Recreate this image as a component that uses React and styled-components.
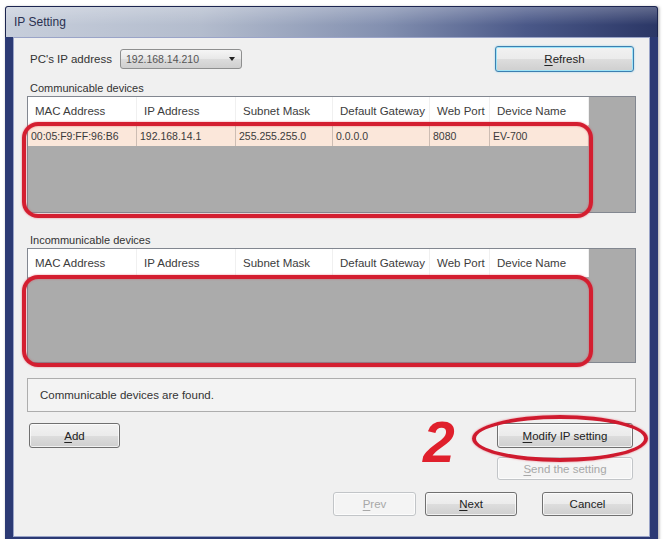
import React from 'react'
import styled, {createGlobalStyle} from 'styled-components'

const GlobalStyle = createGlobalStyle`
  body {
    margin: 0;
    background: #ffffff;
    font-family: "Liberation Sans", Arial, sans-serif;
  }
`

const Window = styled.div`
  margin: 6px 0 0 5px;
  width: 653px;
  box-shadow: 1px 1px 3px rgba(0, 0, 0, 0.35);
`

const TitleBar = styled.div`
  height: 30px;
  border: 1px solid #1c2550;
  border-bottom: 0;
  border-radius: 3px 3px 0 0;
  padding-left: 8px;
  display: flex;
  align-items: center;
  font-size: 12px;
  color: #2a3050;
  background:
    linear-gradient(180deg, rgba(255, 255, 255, 0.25), rgba(255, 255, 255, 0) 60%),
    linear-gradient(90deg, #c7cedb 0%, #b3bccd 30%, #8390b0 58%, #4a5888 80%, #2b3766 100%);
`

const Client = styled.div`
  height: 491px;
  box-sizing: content-box;
  border: 8px solid #2c3a74;
  border-top: 0;
  border-bottom-width: 7px;
  box-shadow: inset 1px 1px 0 #9aa4c8, inset -1px -1px 0 #9aa4c8;
  background: #f0f0f0;
  padding: 9px 14px 0 14px;
  display: flex;
  flex-direction: column;
  position: relative;
`

const TopRow = styled.div`
  height: 26px;
  display: flex;
  align-items: center;
`

const Label = styled.span`
  font-size: 11.5px;
  color: #333;
  padding-left: 3px;
  width: 90px;
`

const Combo = styled.div`
  width: 122px;
  height: 20px;
  box-sizing: border-box;
  border: 1px solid #8e8f8f;
  border-radius: 3px;
  background: linear-gradient(180deg, #f5f5f5 0%, #e8e8e8 50%, #dcdcdc 51%, #cfcfcf 100%);
  display: flex;
  align-items: center;
  padding: 0 6px 0 5px;
  font-size: 10.5px;
  color: #555;
`

const ComboArrow = styled.span`
  margin-left: auto;
  width: 0;
  height: 0;
  border-left: 3px solid transparent;
  border-right: 3px solid transparent;
  border-top: 4px solid #222;
`

const Button = styled.div`
  width: ${p => p.$w}px;
  height: ${p => p.$h || 25}px;
  box-sizing: border-box;
  border: 1px solid ${p => (p.$disabled ? '#c2c5c8' : p.$default ? '#3c7fb1' : '#707070')};
  border-radius: 3px;
  background: ${p =>
    p.$disabled
      ? '#f4f4f4'
      : 'linear-gradient(180deg, #f2f2f2 0%, #ebebeb 50%, #dddddd 51%, #cfcfcf 100%)'};
  box-shadow: ${p =>
    p.$default ? 'inset 0 0 0 1px #9fe4f7, 0 0 2px #8fd0e8' : 'inset 0 0 0 1px rgba(255,255,255,0.7)'};
  display: flex;
  align-items: center;
  justify-content: center;
  font-size: 11.5px;
  color: ${p => (p.$disabled ? '#a8a8a8' : '#222')};

  & u {
    text-underline-offset: 2px;
  }
`

const RefreshButton = styled(Button)`
  margin-left: auto;
  margin-right: 2px;
`

const GroupLabel = styled.div`
  margin-top: ${p => p.$top}px;
  height: 16px;
  line-height: 16px;
  padding-left: 3px;
  font-size: 11px;
  color: #333;
`

const ListView = styled.div`
  position: relative;
  height: ${p => p.$h}px;
  box-sizing: border-box;
  border: 1px solid #828790;
  background: #ababab;
`

const HeaderRow = styled.div`
  width: 561px;
  height: 28px;
  display: flex;
  background: #ffffff;
`

const HeaderCell = styled.div`
  width: ${p => p.$w}px;
  box-sizing: border-box;
  padding-left: ${p => p.$pad || 7}px;
  display: flex;
  align-items: center;
  font-size: 11.5px;
  color: #3c3c3c;
  border-right: 1px solid #f0f0f0;
  white-space: nowrap;
`

const DataRow = styled.div`
  width: 561px;
  height: 21px;
  display: flex;
  background: #fbe7da;
`

const DataCell = styled.div`
  width: ${p => p.$w}px;
  box-sizing: border-box;
  padding-left: 3px;
  display: flex;
  align-items: center;
  font-size: 10.5px;
  color: #3a3a3a;
  border-right: 1px solid #cdbdb3;
  white-space: nowrap;
`

// red marker drawn over the list rows
const Highlight = styled.div`
  position: absolute;
  left: -6px;
  top: ${p => p.$top}px;
  width: 571px;
  height: ${p => p.$h}px;
  box-sizing: border-box;
  border: 4px solid #d41e30;
  border-radius: 16px;
  box-shadow: 0 0 2px rgba(230, 60, 80, 0.7), inset 0 0 2px rgba(230, 60, 80, 0.7);
  pointer-events: none;
`

const StatusBox = styled.div`
  margin-top: 15px;
  height: 34px;
  box-sizing: border-box;
  border: 1px solid #adadad;
  background: #f3f3f3;
  display: flex;
  align-items: center;
  padding-left: 12px;
  font-size: 11.5px;
  color: #333;
`

const Footer = styled.div`
  position: relative;
  margin-top: 11px;
  display: flex;
  flex-direction: column;
`

const FooterRow = styled.div`
  display: flex;
  align-items: center;
  gap: ${p => p.$gap || 0}px;
  justify-content: flex-end;
  margin-top: ${p => p.$top || 0}px;
  padding-right: 3px;
  padding-left: 2px;
`

const AddButton = styled(Button)`
  margin-right: auto;
`

const CancelButton = styled(Button)`
  margin-left: 16px;
`

const StepNumber = styled.div`
  position: absolute;
  left: 396px;
  top: -9px;
  font-size: 57px;
  line-height: 57px;
  font-weight: 700;
  font-style: italic;
  color: #e0202c;
`

const Ring = styled.div`
  position: absolute;
  left: 445px;
  top: -8px;
  width: 176px;
  height: 47px;
  box-sizing: border-box;
  border: 4px solid #cf1a2e;
  border-radius: 50%;
  box-shadow: 0 0 2px rgba(230, 60, 80, 0.7);
  pointer-events: none;
`

const columns = [
  {title: 'MAC Address', w: 109, value: '00:05:F9:FF:96:B6'},
  {title: 'IP Address', w: 99, value: '192.168.14.1'},
  {title: 'Subnet Mask', w: 97, value: '255.255.255.0'},
  {title: 'Default Gateway', w: 97, value: '0.0.0.0'},
  {title: 'Web Port', w: 60, value: '8080'},
  {title: 'Device Name', w: 99, value: 'EV-700'},
]

const DeviceList = ({h, rows, markTop, markH}) => (
  <ListView $h={h}>
    <HeaderRow>
      {columns.map(c => (
        <HeaderCell key={c.title} $w={c.w}>{c.title}</HeaderCell>
      ))}
    </HeaderRow>
    {rows && (
      <DataRow>
        {columns.map(c => (
          <DataCell key={c.title} $w={c.w}>{c.value}</DataCell>
        ))}
      </DataRow>
    )}
    <Highlight $top={markTop} $h={markH} />
  </ListView>
)

const App = () => {
  return (
    <>
      <GlobalStyle />
      <Window>
        <TitleBar>IP Setting</TitleBar>
        <Client>
          <TopRow>
            <Label>PC's IP address</Label>
            <Combo>
              192.168.14.210
              <ComboArrow />
            </Combo>
            <RefreshButton $w={139} $h={26} $default>
              <span><u>R</u>efresh</span>
            </RefreshButton>
          </TopRow>

          <GroupLabel $top={8}>Communicable devices</GroupLabel>
          <DeviceList h={117} rows markTop={25} markH={96} />

          <GroupLabel $top={19}>Incommunicable devices</GroupLabel>
          <DeviceList h={115} markTop={26} markH={92} />

          <StatusBox>Communicable devices are found.</StatusBox>

          <Footer>
            <FooterRow>
              <AddButton $w={91}><span><u>A</u>dd</span></AddButton>
              <Button $w={136}><span><u>M</u>odify IP setting</span></Button>
            </FooterRow>
            <FooterRow $top={9}>
              <Button $w={136} $h={23} $disabled><span><u>S</u>end the setting</span></Button>
            </FooterRow>
            <FooterRow $top={12} $gap={9}>
              <Button $w={83} $h={24} $disabled><span><u>P</u>rev</span></Button>
              <Button $w={92} $h={24}><span><u>N</u>ext</span></Button>
              <CancelButton $w={91} $h={24}>Cancel</CancelButton>
            </FooterRow>
            <StepNumber>2</StepNumber>
            <Ring />
          </Footer>
        </Client>
      </Window>
    </>
  )
}

export default App
